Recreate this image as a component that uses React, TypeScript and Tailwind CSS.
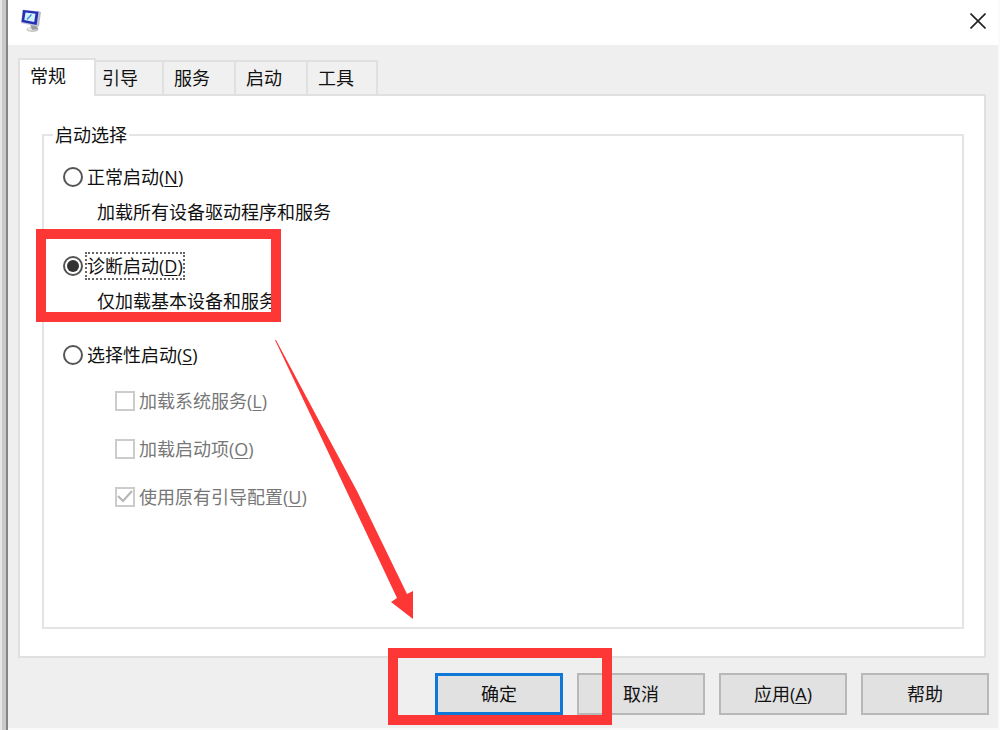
import React from "react";
import clsx from "clsx";

const tabs = ["常规", "引导", "服务", "启动", "工具"];

const services = [
  { name: "加载系统服务", hotkey: "L", checked: false },
  { name: "加载启动项", hotkey: "O", checked: false },
  { name: "使用原有引导配置", hotkey: "U", checked: true },
];

const Hotkey = ({ letter }: { letter: string }) => (
  <>
    (<span className="underline underline-offset-2">{letter}</span>)
  </>
);

const MonitorIcon = () => (
  <svg className="h-6 w-6" viewBox="0 0 24 24" aria-hidden="true">
    <ellipse cx="12.500" cy="21.500" rx="6" ry="2.500" fill="#c4c4c4" />
    <ellipse cx="11.500" cy="21" rx="4" ry="1.500" fill="#e6e6e6" />
    <path d="M10 16l7 1 1 4-6 1z" fill="#9c9c9c" />
    <path d="M18 3l3 1-2 14-3 1z" fill="#b9b9c4" />
    <path d="M2.500 1.500l17 2-2 15L1 15z" fill="#c5c8dc" />
    <path d="M3 2l15.500 1.700-1.800 13.300L1.500 14z" fill="#2531b4" />
    <path d="M5.500 4.500l10 1.300-1.300 8.200L4.300 12z" fill="#d9f0fc" />
    <path d="M7 11.500l4.500-5" stroke="#3a9ad0" strokeWidth="1.500" />
  </svg>
);

const Radio = ({ name, hotkey, focused = false }: { name: string; hotkey: string; focused?: boolean }) => (
  <label className="flex h-6 w-fit items-center gap-1">
    <span className="grid place-items-center">
      <input
        type="radio"
        name="startup"
        defaultChecked={focused}
        className="peer col-start-1 row-start-1 h-5 w-5 appearance-none rounded-full border-2 border-[#555] bg-white"
      />
      <span className="pointer-events-none col-start-1 row-start-1 hidden h-3 w-3 rounded-full bg-[#333] peer-checked:block" />
    </span>
    <span className={clsx(focused && "outline-2 outline-dotted outline-[#666]")}>
      {name}
      <Hotkey letter={hotkey} />
    </span>
  </label>
);

const dialogButton = "h-[42px] w-32 border-2 border-[#b8b8b8] bg-[#e1e1e1]";

const App = () => {
  return (
    <div className="flex min-h-screen overflow-hidden bg-white font-['Open_Sans','Noto_Sans_CJK_SC',sans-serif] text-lg leading-6 text-[#111]">
      <div className="w-2 shrink-0 border-r-2 border-l-2 border-l-[#e6e6e6] border-r-[#858585] bg-[#c9c9c9]" />
      <div className="flex min-w-0 flex-1 flex-col border-r-2 border-b-2 border-[#fafafa] bg-[#efefef]">
        <header className="flex h-[45px] items-start justify-between bg-white pt-2 pr-3 pl-3">
          <MonitorIcon />
          <button type="button" aria-label="关闭" className="pt-[5px]">
            <svg className="h-4 w-4" viewBox="0 0 16 16" stroke="#222" strokeWidth="1.600">
              <path d="M0.500 0.500l15 15M15.500 0.500l-15 15" />
            </svg>
          </button>
        </header>

        <main className="flex flex-1 flex-col pt-[13px] pr-3 pl-[10px]">
          <div role="tablist" className="flex items-end">
            {tabs.map((tab, index) => (
              <button
                key={tab}
                type="button"
                role="tab"
                aria-selected={index === 0}
                className={
                  index === 0
                    ? "relative z-10 -mr-1 -mb-[2px] h-[38px] w-[78px] border-x-2 border-t-2 border-[#e0e0e0] bg-white pb-1 pl-[10px] text-left"
                    : "h-[34px] w-[72px] border-t-2 border-r-2 border-[#e0e0e0] bg-[#f0f0f0] pl-[10px] text-left last:w-[70px]"
                }
              >
                {tab}
              </button>
            ))}
          </div>

          <section role="tabpanel" className="flex flex-1 flex-col border-2 border-[#e0e0e0] bg-white pt-[27px] pr-5 pb-[27px] pl-[22px]">
            <fieldset className="flex-1 border-2 border-[#e4e4e4] pl-[19px]">
              <legend className="-ml-[10px] px-[2px]">启动选择</legend>
              <div className="flex flex-col gap-[30px] pt-[18px]">
                <div className="flex flex-col gap-[11px]">
                  <Radio name="正常启动" hotkey="N" />
                  <p className="pl-[34px]">加载所有设备驱动程序和服务</p>
                </div>

                <div className="relative flex flex-col gap-[11px]">
                  <Radio name="诊断启动" hotkey="D" focused />
                  <p className="pl-[34px]">仅加载基本设备和服务</p>
                  <div className="pointer-events-none absolute -top-[25px] -left-[27px] h-[93px] w-[245px] border-[10px] border-[#fd3636]" />
                </div>

                <div className="relative flex flex-col gap-[22px]">
                  <Radio name="选择性启动" hotkey="S" />
                  <div className="flex flex-col gap-6 pl-[52px] text-[#777]">
                    {services.map((item) => (
                      <label key={item.hotkey} className="flex h-6 w-fit items-center gap-1">
                        <span className="grid">
                          <input
                            type="checkbox"
                            disabled
                            defaultChecked={item.checked}
                            className="peer col-start-1 row-start-1 h-5 w-5 appearance-none border-2 border-[#cccccc] bg-white"
                          />
                          <svg
                            className="pointer-events-none col-start-1 row-start-1 hidden h-5 w-5 peer-checked:block"
                            viewBox="0 0 20 20"
                            fill="none"
                            stroke="#b5b5b5"
                            strokeWidth="2"
                          >
                            <path d="M3 9l5 5 9-10" />
                          </svg>
                        </span>
                        <span>
                          {item.name}
                          <Hotkey letter={item.hotkey} />
                        </span>
                      </label>
                    ))}
                  </div>
                  <svg
                    className="pointer-events-none absolute -top-[3px] left-[212px] h-[280px] w-[140px]"
                    viewBox="0 0 140 280"
                    fill="#fd3636"
                    aria-hidden="true"
                  >
                    <path d="M0 0L1 0 41 75 82 151 132 254 138 251V279L116 262 122 258 72 152 37 78z" />
                  </svg>
                </div>
              </div>
            </fieldset>
          </section>
        </main>

        <footer className="flex justify-end gap-[14px] pt-[15px] pr-[9px] pb-[13px]">
          <div className="relative">
            <button type="button" className="h-[42px] w-32 border-[3px] border-[#0f78d7] bg-[#e1e1e1]">
              确定
            </button>
            <div className="pointer-events-none absolute -top-[25px] -left-[47px] z-10 h-[77px] w-[224px] border-[10px] border-[#fd3636]" />
          </div>
          <button type="button" className={dialogButton}>
            取消
          </button>
          <button type="button" className={dialogButton}>
            应用
            <Hotkey letter="A" />
          </button>
          <button type="button" className={dialogButton}>
            帮助
          </button>
        </footer>
      </div>
    </div>
  );
};

export default App;
